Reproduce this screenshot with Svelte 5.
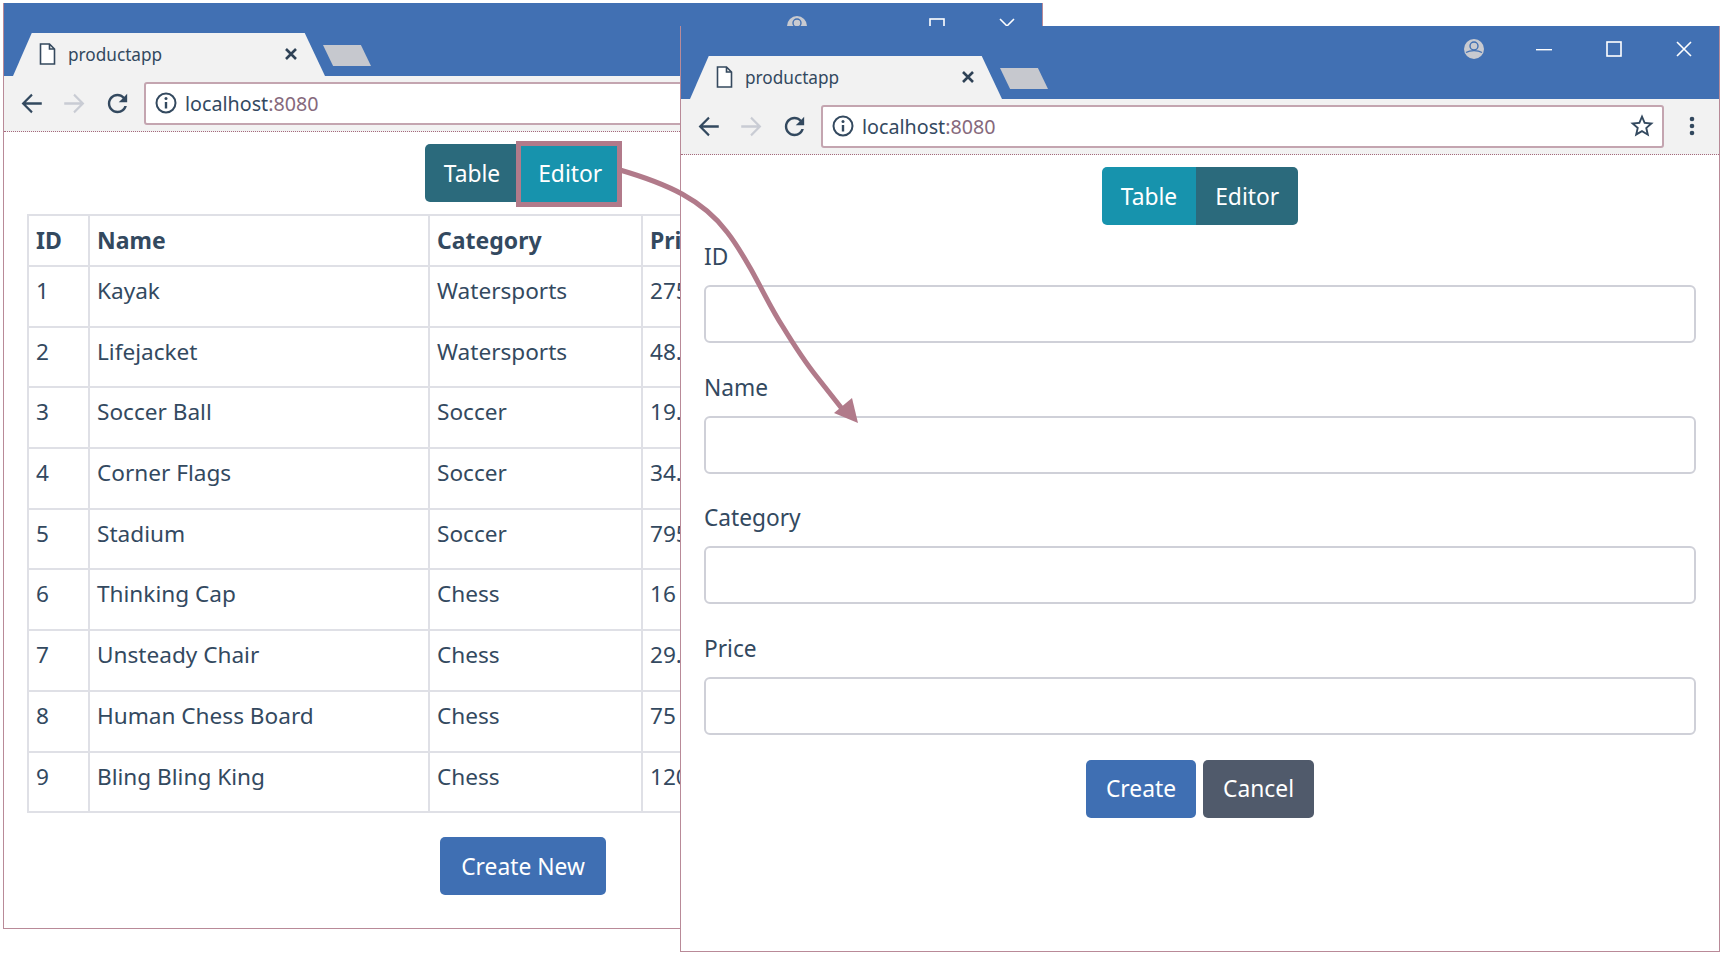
<script>
	const products = [
		[1, 'Kayak', 'Watersports', '275'],
		[2, 'Lifejacket', 'Watersports', '48.95'],
		[3, 'Soccer Ball', 'Soccer', '19.50'],
		[4, 'Corner Flags', 'Soccer', '34.95'],
		[5, 'Stadium', 'Soccer', '79500'],
		[6, 'Thinking Cap', 'Chess', '16'],
		[7, 'Unsteady Chair', 'Chess', '29.95'],
		[8, 'Human Chess Board', 'Chess', '75'],
		[9, 'Bling Bling King', 'Chess', '1200']
	];
	const fields = ['ID', 'Name', 'Category', 'Price'];
</script>

{#snippet chrome()}
	<div class="titlebar">
		<div class="tab">
			<svg class="page-icon" width="17" height="22" viewBox="0 0 17 22">
				<path d="M1.5 1h9l5 5v15h-14z M10.5 1v5h5" fill="#fff" stroke="#35495e" stroke-width="1.6" />
			</svg>
			<span class="tab-title">productapp</span>
			<svg class="tab-close" width="14" height="14" viewBox="0 0 14 14">
				<path d="M2 2l10 10M12 2L2 12" stroke="#2f4256" stroke-width="2.6" fill="none" />
			</svg>
		</div>
		<div class="newtab"></div>
		<div class="controls">
			<span class="control">
				<svg width="22" height="22" viewBox="0 0 22 22">
					<circle cx="11" cy="11" r="10" fill="#c8cad0" />
					<circle cx="11" cy="8" r="4" fill="#c8cad0" stroke="#4170b3" stroke-width="1.4" />
					<path d="M3 14.5c4-2.5 12-2.5 16 0" fill="none" stroke="#4170b3" stroke-width="1.4" />
				</svg>
			</span>
			<span class="control">
				<svg width="16" height="16" viewBox="0 0 16 16"><path d="M0 8.700h16" stroke="#fff" stroke-width="1.400" /></svg>
			</span>
			<span class="control">
				<svg width="16" height="16" viewBox="0 0 16 16"><rect x="1" y="1" width="14" height="14" fill="none" stroke="#fff" stroke-width="1.6" /></svg>
			</span>
			<span class="control">
				<svg width="16" height="16" viewBox="0 0 16 16"><path d="M1 1l14 14M15 1L1 15" stroke="#fff" stroke-width="1.6" /></svg>
			</span>
		</div>
	</div>
	<div class="toolbar">
		<span class="tool">
			<svg width="29" height="29" viewBox="0 0 24 24" fill="#33495f"><path d="M20.5 11H7.4l5.6-5.6L11.8 4 3.8 12l8 8 1.2-1.4L7.4 13h13.1z" /></svg>
		</span>
		<span class="tool">
			<svg width="29" height="29" viewBox="0 0 24 24" fill="#c9ccd4"><path d="M3.5 11h13.1L11 5.4 12.2 4l8 8-8 8-1.2-1.4 5.600-5.600H3.500z" /></svg>
		</span>
		<span class="tool">
			<svg width="29" height="29" viewBox="0 0 24 24" fill="#33495f"><path d="M17.650 6.350C16.200 4.900 14.210 4 12 4c-4.420 0-7.990 3.580-7.990 8s3.570 8 7.990 8c3.730 0 6.840-2.550 7.730-6h-2.080c-.82 2.330-3.040 4-5.650 4-3.310 0-6-2.690-6-6s2.690-6 6-6c1.660 0 3.140.69 4.220 1.780L13 11h7V4l-2.350 2.350z" /></svg>
		</span>
		<div class="url">
			<svg width="22" height="22" viewBox="0 0 22 22">
				<circle cx="11" cy="11" r="9.500" fill="none" stroke="#33495f" stroke-width="2" />
				<path d="M11 10v6.500" stroke="#33495f" stroke-width="2.400" />
				<circle cx="11" cy="6.500" r="1.500" fill="#33495f" />
			</svg>
			<span class="url-text">localhost<span class="port">:8080</span></span>
			<svg class="star" width="28" height="28" viewBox="0 0 24 24" fill="#33495f"><path d="M22 9.240l-7.190-.62L12 2 9.190 8.630 2 9.240l5.460 4.730L5.820 21 12 17.270 18.180 21l-1.630-7.030L22 9.240zM12 15.400l-3.760 2.270 1-4.280-3.320-2.880 4.380-.38L12 6.100l1.710 4.040 4.380.38-3.320 2.880 1 4.280L12 15.400z" /></svg>
		</div>
		<span class="menu">
			<svg width="6" height="20" viewBox="0 0 6 20" fill="#33495f"><circle cx="3" cy="3" r="2.300" /><circle cx="3" cy="10" r="2.300" /><circle cx="3" cy="17" r="2.300" /></svg>
		</span>
	</div>
{/snippet}

<div class="desktop">
	<section class="window back">
		{@render chrome()}
		<div class="content">
			<div class="btn-group">
				<button class="btn dark">Table</button>
				<button class="btn teal">Editor<span class="callout"></span></button>
			</div>
			<table>
				<colgroup>
					<col style="width: 61px" />
					<col style="width: 340px" />
					<col style="width: 213px" />
					<col />
				</colgroup>
				<thead>
					<tr><th>ID</th><th>Name</th><th>Category</th><th>Price</th></tr>
				</thead>
				<tbody>
					{#each products as [id, name, category, price]}
						<tr><td>{id}</td><td>{name}</td><td>{category}</td><td>{price}</td></tr>
					{/each}
				</tbody>
			</table>
			<div class="actions">
				<button class="btn primary wide">Create New</button>
			</div>
		</div>
	</section>

	<section class="window front">
		{@render chrome()}
		<div class="content">
			<div class="btn-group">
				<button class="btn teal">Table</button>
				<button class="btn dark">Editor</button>
			</div>
			<form class="editor">
				{#each fields as field}
					<div class="form-group">
						<label for={field}>{field}</label>
						<input id={field} />
					</div>
				{/each}
			</form>
			<div class="actions form-actions">
				<button class="btn primary">Create</button>
				<button class="btn secondary">Cancel</button>
			</div>
		</div>
	</section>

	<svg class="arrow" width="1725" height="957" viewBox="0 0 1725 957">
		<path d="M620 170C668 184 703 200 727 232C738 246 745 259 753 273C765 295 772 310 783 327C794 345 805 362 817 377L843 410" fill="none" stroke="#b17a8a" stroke-width="5" />
		<path d="M858 423L834 413L852 398z" fill="#b17a8a" />
	</svg>
</div>

<style>
	:global(body) {
		background: #fff;
	}

	.desktop {
		position: relative;
		width: 1725px;
		height: 957px;
		overflow: hidden;
		font-family: "Noto Sans", "Open Sans", sans-serif;
		color: #33495f;
	}

	.window {
		position: absolute;
		box-sizing: border-box;
		width: 1040px;
		height: 926px;
		display: flex;
		flex-direction: column;
		background: #fff;
		border: 1px solid #b98a98;
		border-top: none;
	}

	.back {
		left: 3px;
		top: 3px;
	}

	.front {
		left: 680px;
		top: 26px;
	}

	.titlebar {
		height: 73px;
		flex: none;
		display: flex;
		align-items: flex-end;
		background: #4170b3;
		padding-left: 9px;
	}

	.tab {
		width: 312px;
		height: 43px;
		box-sizing: border-box;
		display: flex;
		align-items: center;
		padding: 0 0 1px 26px;
		background: #f2f2f2;
		clip-path: polygon(0 100%, 6% 0, 93.500% 0, 100% 100%);
	}

	.page-icon {
		flex: none;
		margin-right: 12px;
	}

	.tab-title {
		font-size: 17.200px;
		flex: 1;
	}

	.tab-close {
		margin-right: 27px;
	}

	.newtab {
		width: 48px;
		height: 21px;
		margin: 0 0 10px -2px;
		background: #c6c8ce;
		clip-path: polygon(0 0, 79% 0, 100% 100%, 21% 100%);
	}

	.controls {
		margin-left: auto;
		align-self: flex-start;
		display: flex;
		margin-right: 0;
	}

	.control {
		width: 70px;
		height: 46px;
		display: flex;
		align-items: center;
		justify-content: center;
	}

	.toolbar {
		height: 56px;
		flex: none;
		box-sizing: border-box;
		display: flex;
		align-items: center;
		padding: 0 0 1px 6px;
		background: #f2f2f2;
		border-bottom: 1px dotted #a5697c;
	}

	.tool {
		width: 43px;
		display: flex;
		justify-content: center;
	}

	.url {
		flex: 1;
		height: 43px;
		box-sizing: border-box;
		margin-left: 5px;
		display: flex;
		align-items: center;
		padding: 0 6px 0 9px;
		background: #fff;
		border: 2px solid #c4a5b0;
		border-radius: 3px;
	}

	.url-text {
		margin-left: 8px;
		font-size: 19.700px;
		flex: 1;
	}

	.port {
		color: #86697c;
	}

	.menu {
		width: 55px;
		display: flex;
		justify-content: center;
	}

	.content {
		flex: 1;
		padding: 12px 23px 0;
		min-height: 0;
		overflow: hidden;
	}

	.btn-group {
		display: flex;
		justify-content: center;
	}

	.btn {
		position: relative;
		height: 58px;
		padding: 0 19px;
		border: none;
		border-radius: 5px;
		color: #fff;
		font-family: inherit;
		font-size: 22.800px;
	}

	.btn-group .btn:first-child {
		border-radius: 5px 0 0 5px;
	}

	.btn-group .btn:last-child {
		border-radius: 0 5px 5px 0;
	}

	.teal {
		background: #1793ad;
	}

	.dark {
		background: #2b6a7c;
	}

	.primary {
		background: #3f6fb3;
		padding: 0 20px;
	}

	.wide {
		padding: 0 21px;
	}

	.secondary {
		background: #505a6b;
		padding: 0 20px;
	}

	.callout {
		position: absolute;
		top: -3px;
		left: -3px;
		right: -1px;
		bottom: -5px;
		border: 5px solid #b17a8a;
	}

	table {
		width: 990px;
		margin-top: 12px;
		table-layout: fixed;
		border-collapse: collapse;
		font-size: 22.600px;
		line-height: 36px;
	}

	th,
	td {
		border: 2px solid #dfe0e6;
		padding: 6px 7px 7px;
		text-align: left;
		white-space: nowrap;
	}

	th {
		font-size: 23px;
	}

	td {
		padding-bottom: 16.700px;
	}

	.actions {
		display: flex;
		justify-content: center;
		gap: 7px;
		margin-top: 24px;
	}

	.form-actions {
		margin-top: -3px;
	}

	.editor {
		margin-top: 15px;
	}

	.form-group {
		margin-bottom: 27.670px;
	}

	label {
		display: block;
		font-size: 22.700px;
		line-height: 33px;
		margin-bottom: 12px;
	}

	input {
		display: block;
		width: 100%;
		height: 58px;
		box-sizing: border-box;
		background: #fff;
		border: 2px solid #cfd0d8;
		border-radius: 6px;
	}

	.arrow {
		position: absolute;
		left: 0;
		top: 0;
		pointer-events: none;
	}
</style>
